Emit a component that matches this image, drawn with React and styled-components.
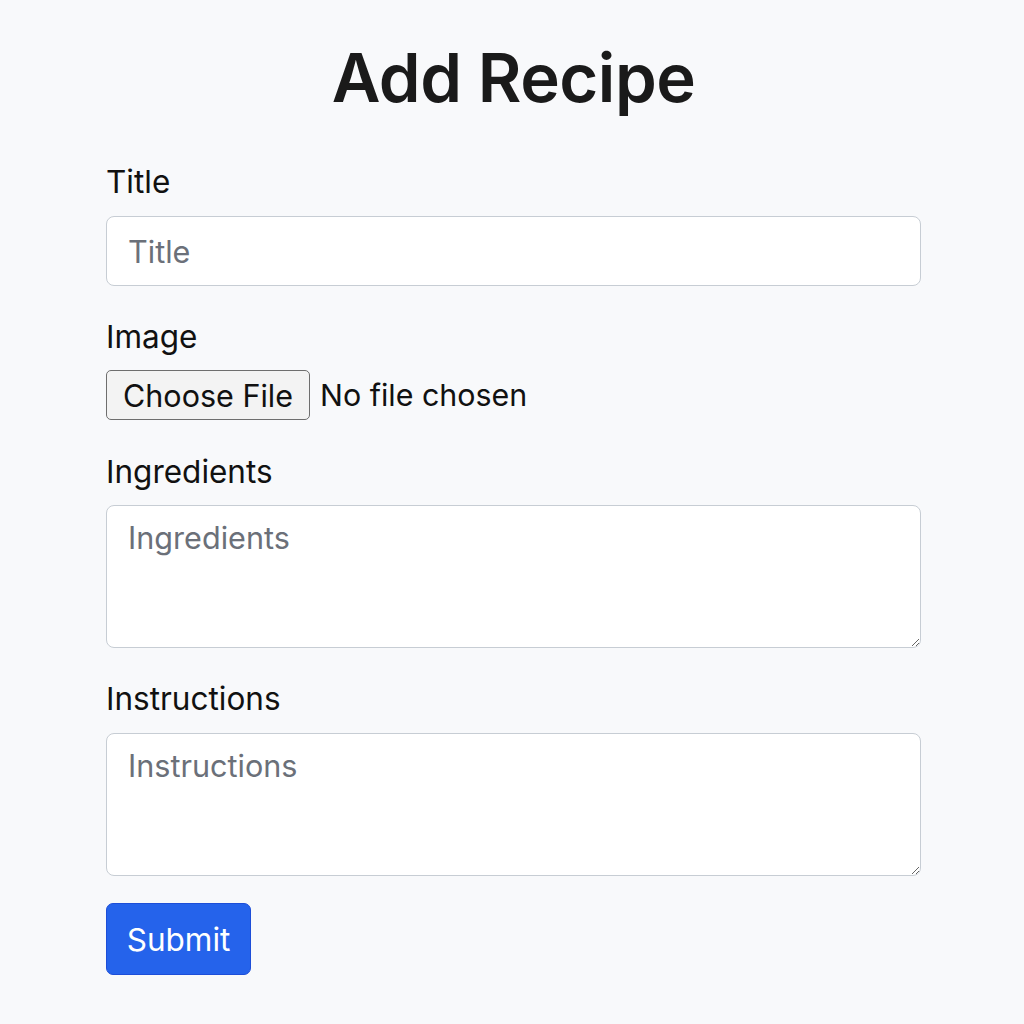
import React from "react";
import styled, { createGlobalStyle } from "styled-components";

const Global = createGlobalStyle`
  html, body { margin: 0; padding: 0; background: #f8f9fb; }
  body { font-family: Inter, "Helvetica Neue", Arial, sans-serif; color: #111; }
  * { box-sizing: border-box; }
`;

const Page = styled.div`
  width: 1024px;
  height: 1024px;
  background: #f8f9fb;
  display: flex;
  flex-direction: column;
  align-items: center;
  padding-top: 38px;
  padding-left: 3px;
`;

const Heading = styled.h1`
  margin: 0 0 46px;
  font-size: 67px;
  line-height: 80px;
  font-weight: 600;
  color: #1a1a1a;
  letter-spacing: -0.5px;
`;

const Form = styled.form`
  width: 815px;
  display: flex;
  flex-direction: column;
`;

const Field = styled.div`
  display: flex;
  flex-direction: column;
  gap: ${(p) => p.$gap || 15}px;
  margin-bottom: ${(p) => p.$mb || 34}px;
`;

const Label = styled.label`
  font-size: 31.5px;
  line-height: 36px;
  font-weight: 400;
  color: #111;
`;

const TextInput = styled.input`
  height: 70px;
  width: 100%;
  border: 1.5px solid #c7cdd4;
  border-radius: 8px;
  background: #fff;
  padding: 0 21px;
  font-family: inherit;
  font-size: 30.6px;
  color: #222;
  outline: none;
  &::placeholder { color: #6b7079; }
`;

const TextArea = styled.textarea`
  height: 143px;
  width: 100%;
  border: 1.5px solid #c7cdd4;
  border-radius: 8px;
  background: #fff;
  padding: 14px 21px;
  font-family: inherit;
  font-size: 30.6px;
  line-height: 36px;
  color: #222;
  outline: none;
  resize: vertical;
  &::placeholder { color: #6b7079; }
`;

const FileRow = styled.div`
  display: flex;
  align-items: center;
  gap: 10px;
`;

const FileButton = styled.button`
  height: 50px;
  width: 204px;
  border: 1.5px solid #6e6e6e;
  border-radius: 5px;
  background: #f3f3f3;
  font-family: inherit;
  font-size: 30.5px;
  color: #111;
  padding: 0;
`;

const FileText = styled.span`
  font-size: 30.4px;
  color: #111;
`;

const Submit = styled.button`
  align-self: flex-start;
  width: 145px;
  height: 72px;
  border: 1px solid #1d4ed8;
  border-radius: 7px;
  background: #2563eb;
  color: #fff;
  font-family: inherit;
  font-size: 31.5px;
  padding: 0;
`;

export default function App() {
  return (
    <Page>
      <Global />
      <Heading>Add Recipe</Heading>
      <Form onSubmit={(e) => e.preventDefault()}>
        <Field $gap={16} $mb={33}>
          <Label>Title</Label>
          <TextInput placeholder="Title" />
        </Field>
        <Field $gap={15} $mb={34}>
          <Label>Image</Label>
          <FileRow>
            <FileButton type="button">Choose File</FileButton>
            <FileText>No file chosen</FileText>
          </FileRow>
        </Field>
        <Field $gap={15} $mb={33}>
          <Label>Ingredients</Label>
          <TextArea placeholder="Ingredients" />
        </Field>
        <Field $gap={16} $mb={27}>
          <Label>Instructions</Label>
          <TextArea placeholder="Instructions" />
        </Field>
        <Submit type="submit">Submit</Submit>
      </Form>
    </Page>
  );
}
